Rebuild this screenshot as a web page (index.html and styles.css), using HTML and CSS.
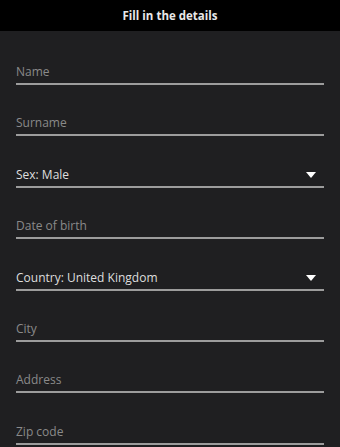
FILE: index.html
```html
<!DOCTYPE html>
<html>
<head>
<meta charset="utf-8">
<link rel="stylesheet" href="styles.css">
</head>
<body>
<header class="topbar">Fill in the details</header>
<form class="form">
  <div class="field"><span class="placeholder">Name</span></div>
  <div class="field"><span class="placeholder">Surname</span></div>
  <div class="field select"><span class="value">Sex: Male</span><span class="caret"></span></div>
  <div class="field"><span class="placeholder">Date of birth</span></div>
  <div class="field select"><span class="value">Country: United Kingdom</span><span class="caret"></span></div>
  <div class="field"><span class="placeholder">City</span></div>
  <div class="field"><span class="placeholder">Address</span></div>
  <div class="field"><span class="placeholder">Zip code</span></div>
</form>
</body>
</html>
```
FILE: styles.css
```css
html, body {
  margin: 0;
  padding: 0;
  background: #1f1f21;
  font-family: "Open Sans", "Noto Sans", sans-serif;
}
.topbar {
  height: 31px;
  background: #000;
  color: #e8e8e8;
  font-weight: 700;
  font-size: 11.5px;
  display: flex;
  align-items: center;
  justify-content: center;
}
.form {
  padding: 31px 16px 0;
  display: flex;
  flex-direction: column;
  gap: 28.4px;
}
.field {
  height: 20px;
  line-height: 20px;
  padding-bottom: 1px;
  border-bottom: 2px solid #9c9c9c;
  font-size: 12px;
  display: flex;
  align-items: center;
  justify-content: space-between;
}
.placeholder {
  color: #8a8a8a;
}
.value {
  color: #dedede;
}
.caret {
  width: 0;
  height: 0;
  border-left: 5.5px solid transparent;
  border-right: 5.5px solid transparent;
  border-top: 6px solid #fff;
  margin-right: 8px;
}
```
